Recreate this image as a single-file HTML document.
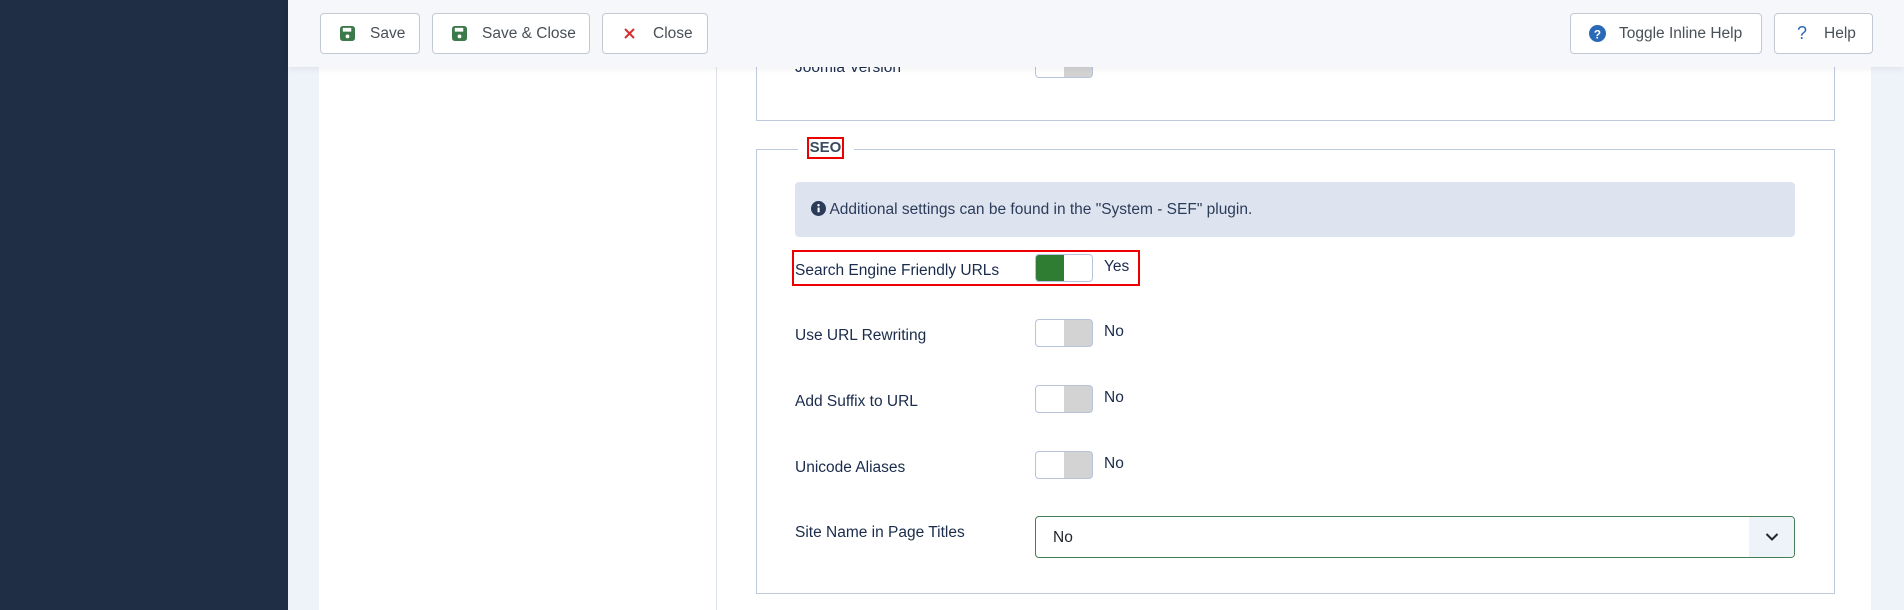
<!DOCTYPE html>
<html><head><meta charset="utf-8"><style>
*{box-sizing:border-box;margin:0;padding:0}
body{width:1904px;height:610px;overflow:hidden;background:#eef2f9;font-family:"Liberation Sans",sans-serif;position:relative;color:#1a2b4c}
.a{position:absolute}
#side{left:0;top:0;width:288px;height:610px;background:#1f2d45}
#card{left:319px;top:0;height:610px;background:#fff;width:1552px}
#vl{left:716px;top:0;width:1px;height:610px;background:#dfe3ea}
#tb{left:288px;top:0;width:1616px;height:67px;background:#f6f7fa;box-shadow:0 2px 6px rgba(0,0,0,.06);z-index:5}
.btn{position:absolute;top:13px;height:41px;border:1px solid #c3c9d4;border-radius:4px;background:#fff;font-size:15.5px;color:#495057;display:flex;align-items:center;z-index:6}
.fs{border:1px solid #bfcadc}
.lbl{position:absolute;left:795px;font-size:15.5px;color:#1a2b4c}
.tg{position:absolute;left:1035px;width:58px;height:28px;border:1px solid #b7c4dc;border-radius:4px;background:linear-gradient(to right,#fff 50%,#d3d3d3 50%)}
.val{position:absolute;left:1104px;font-size:15.5px;color:#1a2b4c}
</style></head><body>
<div id="side" class="a"></div>
<div id="card" class="a"></div>
<div id="vl" class="a"></div>
<div id="tb" class="a"></div>
<div class="btn" style="left:320px;width:100px"><svg style="margin-left:19px" width="15" height="15" viewBox="0 0 16 16"><rect x="0" y="0" width="16" height="16" rx="3" fill="#3d7a4b"/><rect x="3" y="2" width="9" height="4" fill="#fff"/><circle cx="8" cy="11" r="2" fill="#fff"/></svg><span style="margin-left:15px">Save</span></div>
<div class="btn" style="left:432px;width:158px"><svg style="margin-left:19px" width="15" height="15" viewBox="0 0 16 16"><rect x="0" y="0" width="16" height="16" rx="3" fill="#3d7a4b"/><rect x="3" y="2" width="9" height="4" fill="#fff"/><circle cx="8" cy="11" r="2" fill="#fff"/></svg><span style="margin-left:15px">Save &amp; Close</span></div>
<div class="btn" style="left:602px;width:106px"><svg style="margin-left:21px" width="11" height="11" viewBox="0 0 11 11"><path d="M1 1L10 10M10 1L1 10" stroke="#d32f2f" stroke-width="2"/></svg><span style="margin-left:18px">Close</span></div>
<div class="btn" style="left:1570px;width:192px"><svg style="margin-left:18px" width="17" height="17" viewBox="0 0 16 16"><circle cx="8" cy="8" r="8" fill="#2a69b8"/><text x="8" y="12.5" font-size="11" font-weight="bold" fill="#fff" text-anchor="middle" font-family="Liberation Sans">?</text></svg><span style="margin-left:13px">Toggle Inline Help</span></div>
<div class="btn" style="left:1774px;width:99px"><span style="margin-left:22px;color:#2a69b8;font-size:18px">?</span><span style="margin-left:17px">Help</span></div>

<div class="a fs" style="left:756px;top:30px;width:1079px;height:91px;border-top:none"></div>
<div class="lbl" style="top:59px">Joomla Version</div>
<div class="tg" style="top:50px"></div>
<div class="val" style="top:54px">Hide</div>

<div class="a fs" style="left:756px;top:149px;width:1079px;height:445px"></div>
<div class="a" style="left:798px;top:138px;width:56px;height:20px;background:#fff"></div>
<div class="a" style="left:807px;top:137px;width:37px;height:22px;border:2px solid #e00;font-weight:bold;font-size:15px;color:#3b4a5e;line-height:18px;text-align:center">SEO</div>
<div class="a" style="left:795px;top:182px;width:1000px;height:55px;background:#dee4ef;border-radius:4px;font-size:15.5px;line-height:55px;padding-left:16px;color:#2b3c5a"><svg width="15" height="15" viewBox="0 0 16 16" style="vertical-align:-2px"><circle cx="8" cy="8" r="8" fill="#2b3c5a"/><rect x="7" y="7" width="2.2" height="5" fill="#fff"/><circle cx="8" cy="4.5" r="1.3" fill="#fff"/></svg> Additional settings can be found in the "System - SEF" plugin.</div>
<div class="a" style="left:792px;top:250px;width:348px;height:36px;border:2px solid #e00"></div>
<div class="lbl" style="top:262px">Search Engine Friendly URLs</div>
<div class="tg" style="top:254px;background:linear-gradient(to right,#2e7d32 50%,#fff 50%)"></div>
<div class="val" style="top:258px">Yes</div>
<div class="lbl" style="top:327px">Use URL Rewriting</div>
<div class="tg" style="top:319px"></div><div class="val" style="top:323px">No</div>
<div class="lbl" style="top:393px">Add Suffix to URL</div>
<div class="tg" style="top:385px"></div><div class="val" style="top:389px">No</div>
<div class="lbl" style="top:459px">Unicode Aliases</div>
<div class="tg" style="top:451px"></div><div class="val" style="top:455px">No</div>
<div class="lbl" style="top:524px">Site Name in Page Titles</div>
<div class="a" style="left:1035px;top:516px;width:760px;height:42px;border:1px solid #457d54;border-radius:4px;background:#fff;overflow:hidden">
<span style="position:absolute;left:17px;top:12px;font-size:15.5px;color:#22262a">No</span>
<div style="position:absolute;right:0;top:0;width:45px;height:40px;background:#eef2f9"><svg style="position:absolute;left:16px;top:15px" width="14" height="10" viewBox="0 0 14 10"><path d="M1.5 2 L7 7.5 L12.5 2" stroke="#22262a" stroke-width="2" fill="none"/></svg></div></div>
</body></html>
